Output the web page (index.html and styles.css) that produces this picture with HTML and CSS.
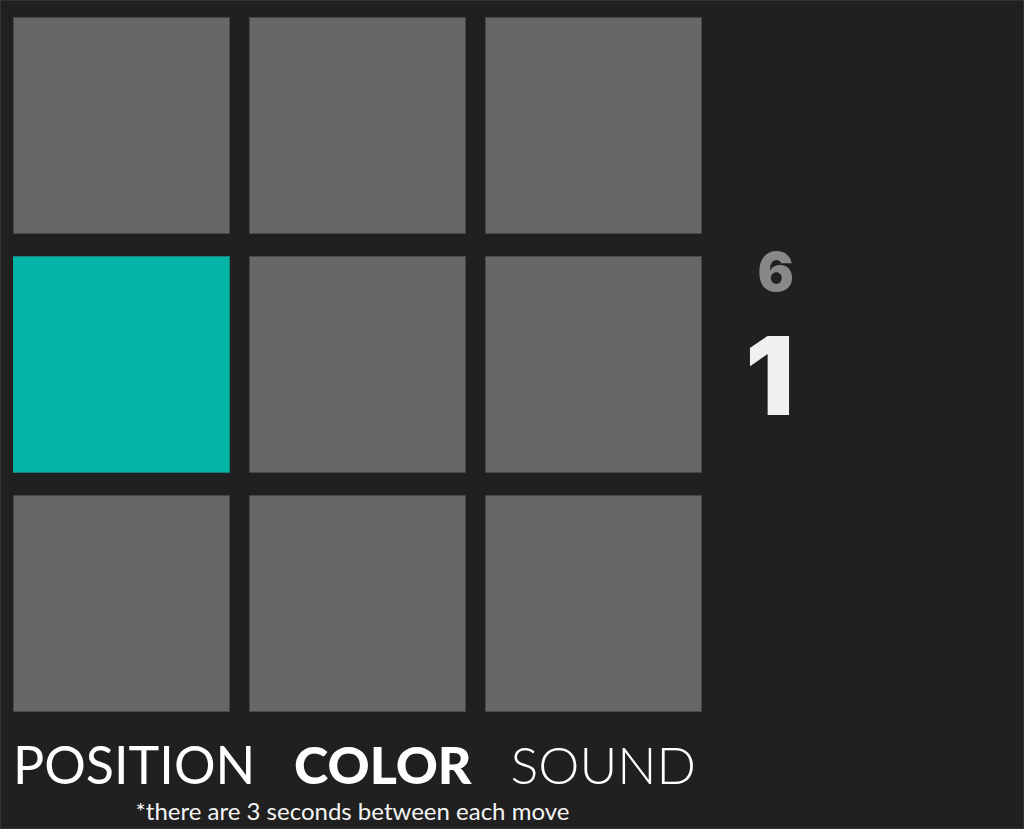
FILE: index.html
```html
<!DOCTYPE html>
<html lang="en">
<head>
<meta charset="utf-8">
<title>Memory game</title>
<link rel="stylesheet" href="styles.css">
</head>
<body>
<main class="game">
  <section class="play">
    <div class="board">
      <div class="tile"></div><div class="tile"></div><div class="tile"></div>
      <div class="tile active"></div><div class="tile"></div><div class="tile"></div>
      <div class="tile"></div><div class="tile"></div><div class="tile"></div>
    </div>
    <div class="controls">
      <button class="match position" type="button">POSITION</button>
      <button class="match color" type="button">COLOR</button>
      <button class="match sound" type="button">SOUND</button>
    </div>
    <p class="note">*there are 3 seconds between each move</p>
  </section>
  <aside class="score">
    <div class="previous">6</div>
    <div class="current">1</div>
  </aside>
</main>
</body>
</html>
```

FILE: styles.css
```css
* { box-sizing: border-box; }
body {
  margin: 0;
  background: #202020;
  color: #fff;
  font-family: Lato, "Open Sans", sans-serif;
}
.game {
  display: flex;
  gap: 40px;
  min-height: 100vh;
  padding: 16px 12px 0;
  border: 1px solid #333;
  border-bottom-color: #3a3338;
}
.play {
  flex: 0 1 689px;
  min-width: 0;
}
.board {
  display: grid;
  grid-template-columns: repeat(3, 1fr);
  gap: 22px 19px;
}
.tile {
  aspect-ratio: 1;
  background: #676767;
  border: 1px solid #484848;
}
.active {
  background: #02b5a7;
  border-color: #168078;
  border-left-color: #02b5a7;
}
.controls {
  display: flex;
  justify-content: space-between;
  padding: 22px 6px 0 0;
}
.match {
  padding: 0;
  border: 0;
  background: none;
  color: inherit;
  font: 400 52px/60px Lato, "Open Sans", sans-serif;
  cursor: pointer;
}
.color { font-weight: 900; }
.sound { font-weight: 300; }
.note {
  margin: 4px 10px 0 0;
  font-size: 24px;
  line-height: 26px;
  text-align: center;
  color: #f4f4f4;
}
.score {
  display: flex;
  flex-direction: column;
  align-items: flex-end;
  width: 52px;
  padding-top: 223px;
  font-family: Inter, Lato, sans-serif;
  font-weight: 900;
}
.previous {
  color: #888;
  font-size: 54px;
  line-height: 64px;
}
.current {
  margin-top: 8px;
  color: #f0f0f0;
  font-size: 108px;
  line-height: 128px;
}
```
